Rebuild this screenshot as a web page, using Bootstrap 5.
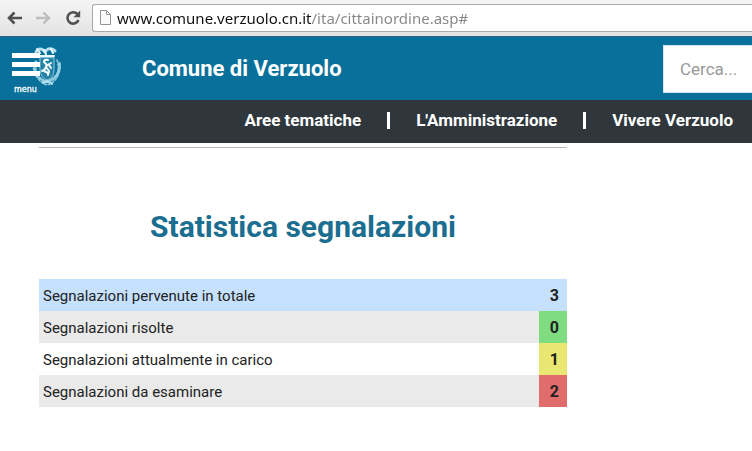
<!DOCTYPE html>
<html lang="it">
<head>
<meta charset="utf-8">
<meta name="viewport" content="width=device-width, initial-scale=1">
<title>Comune di Verzuolo</title>
<link rel="stylesheet" href="https://cdn.jsdelivr.net/npm/bootstrap@5.3.0/dist/css/bootstrap.min.css">
<style>
body { font-family: Roboto, "Liberation Sans", sans-serif; color: #222; background: #fff; overflow-x: hidden; }
.toolbar { background: linear-gradient(#f5f5f5, #e3e3e3); height: 36px; padding: 4px 0 5px 6px; }
.tool-btn { width: 18px; height: 18px; line-height: 0; }
.tools { gap: 11px; }
.address { margin-left: 10px; height: 28px; background: #fff; border: 1px solid #a9a9a9; border-right: 0; border-radius: 3px 0 0 3px; padding-left: 7px; }
.url { font-family: "Noto Sans", sans-serif; font-size: 15px; line-height: 24px; color: transparent; background: linear-gradient(90deg, #111 194px, #858585 194px); -webkit-background-clip: text; background-clip: text; margin-left: 6px; outline: 0; min-width: 0; }
.site-head { background: #08709a; border-top: 1px solid #2b657d; height: 64px; padding-left: 11px; }
.menu-btn { width: 52px; height: 48px; line-height: 0; }
.brand { font-size: 22px; font-weight: 700; line-height: 32px; margin-left: 79px; }
.search { width: 89px; }
.search .form-control { height: 48px; font-size: 17px; padding: 0 0 0 16px; border: 1px solid #d5e6ee; border-right: 0; }
.search .form-control::placeholder { color: #999; }
.search .form-control::-webkit-search-cancel-button { display: none; }
.site-nav { background: #2f373d; height: 43px; padding: 0 19px 2px 0; gap: 26px; font-size: 17px; font-weight: 700; }
.site-nav .sep { width: 3px; height: 17px; background: #fff; }
.content { max-width: 528px; margin-left: 39px; border-top: 1px solid #b9b9b9; margin-top: 4px; }
.content h1 { color: #1b6e90; font-size: 30px; font-weight: 700; line-height: 40px; margin: 59px 0 32px; }
.stats { font-size: 15px; line-height: 24px; }
.stats th, .stats td { padding: 5px 4px 3px; border: 0; }
.stats td { width: 28px; font-size: 16px; font-weight: 700; text-align: right; padding-right: 8px; }
.total > * { background: #c5e1fe; }
.alt > * { background: #eaeaea; }
.stats .done { background: #7fdc80; }
.stats .taken { background: #e9e771; }
.stats .todo { background: #e16c6c; }
</style>
<script src="https://cdn.jsdelivr.net/npm/bootstrap@5.3.0/dist/js/bootstrap.bundle.min.js" defer></script>
</head>
<body>
<div class="toolbar d-flex align-items-center">
  <div class="tools d-flex">
    <button class="tool-btn btn p-0 border-0" aria-label="Indietro"><svg width="18" height="18" fill="none" stroke="#505050" stroke-width="2.6"><path d="M16 9H3M8.500 3.500L3 9l5.500 5.500"/></svg></button>
    <button class="tool-btn btn p-0 border-0" aria-label="Avanti"><svg width="18" height="18" fill="none" stroke="#bdbdbd" stroke-width="2.400"><path d="M1 9h13M8.500 3.500L14 9l-5.500 5.500"/></svg></button>
    <button class="tool-btn btn p-0 border-0" aria-label="Ricarica"><svg width="18" height="18" fill="none" stroke="#505050" stroke-width="2.600"><path d="M13.500 5.200A5.700 5.700 0 1 0 14.500 11"/><path d="M16.200 1.500v6.700H9.500z" fill="#505050" stroke="none"/></svg></button>
  </div>
  <div class="address d-flex align-items-center flex-grow-1">
    <svg width="11" height="15" fill="#fafafa" stroke="#929292"><path d="M.5.5h6l4 4v10H.5zM6.500.5v4h4"/></svg>
    <input class="url border-0 p-0 flex-grow-1" type="text" aria-label="Indirizzo" value="www.comune.verzuolo.cn.it/ita/cittainordine.asp#">
  </div>
</div>
<header class="site-head d-flex align-items-center text-white">
  <button class="menu-btn btn p-0 border-0" aria-label="menu">
    <svg width="52" height="48" viewBox="11 45 52 48">
      <g fill="none" stroke="#b5e0ef" stroke-linecap="round">
        <path d="M36 52q4-6 9 0 4-6 10-1" stroke-width="3" stroke-dasharray="3 1"/>
        <path d="M37 49l3 4M44 50l2 4M51 49l2 4M39 56h15" stroke="#e9f9ff" stroke-width="2"/>
        <path d="M40 58v12q1 8 7 10 7-2 7-10V58z" fill="#2580a5" stroke="#8ccbe0" stroke-width="1"/>
        <path d="M36 62q-4 15 11 20 15-6 12-20" stroke="#8ccbe0" stroke-width="3" stroke-dasharray="1 2.500"/>
        <path d="M33 64q1 16 14 21 13-4 13-21M57 60q3 9-1 16" stroke="#9bd2e4" stroke-width="1.500" stroke-dasharray="2 2"/>
        <path d="M48 60q-4-1-4 2l3 3-2 4-3 2M46 66l5-3M46 67l3 4-1 4M44 71l4 2M49 65l2 3" stroke="#f2fcff" stroke-width="2"/>
        <path d="M43 83l4-2 5 3" stroke-width="2"/>
      </g>
      <path d="M12 53h28v5H12zM12 62h28v5H12zM12 71h28v5H12z" fill="#fff"/>
      <text x="14" y="92" fill="#fff" stroke="#fff" stroke-width=".3" font-family="DejaVu Sans, sans-serif" font-size="8">menu</text>
    </svg>
  </button>
  <a class="brand text-white text-decoration-none" href="#">Comune di Verzuolo</a>
  <form class="search ms-auto" role="search"><input class="form-control rounded-0" type="search" placeholder="Cerca..." aria-label="Cerca"></form>
</header>
<nav class="site-nav d-flex align-items-center justify-content-end" aria-label="Principale">
  <a class="text-white text-decoration-none" href="#">Aree tematiche</a>
  <span class="sep"></span>
  <a class="text-white text-decoration-none" href="#">L'Amministrazione</a>
  <span class="sep"></span>
  <a class="text-white text-decoration-none" href="#">Vivere Verzuolo</a>
</nav>
<main class="content">
  <h1 class="text-center">Statistica segnalazioni</h1>
  <table class="stats w-100">
    <tbody>
      <tr class="total"><th class="fw-normal" scope="row">Segnalazioni pervenute in totale</th><td>3</td></tr>
      <tr class="alt"><th class="fw-normal" scope="row">Segnalazioni risolte</th><td class="done">0</td></tr>
      <tr><th class="fw-normal" scope="row">Segnalazioni attualmente in carico</th><td class="taken">1</td></tr>
      <tr class="alt"><th class="fw-normal" scope="row">Segnalazioni da esaminare</th><td class="todo">2</td></tr>
    </tbody>
  </table>
</main>
</body>
</html>
